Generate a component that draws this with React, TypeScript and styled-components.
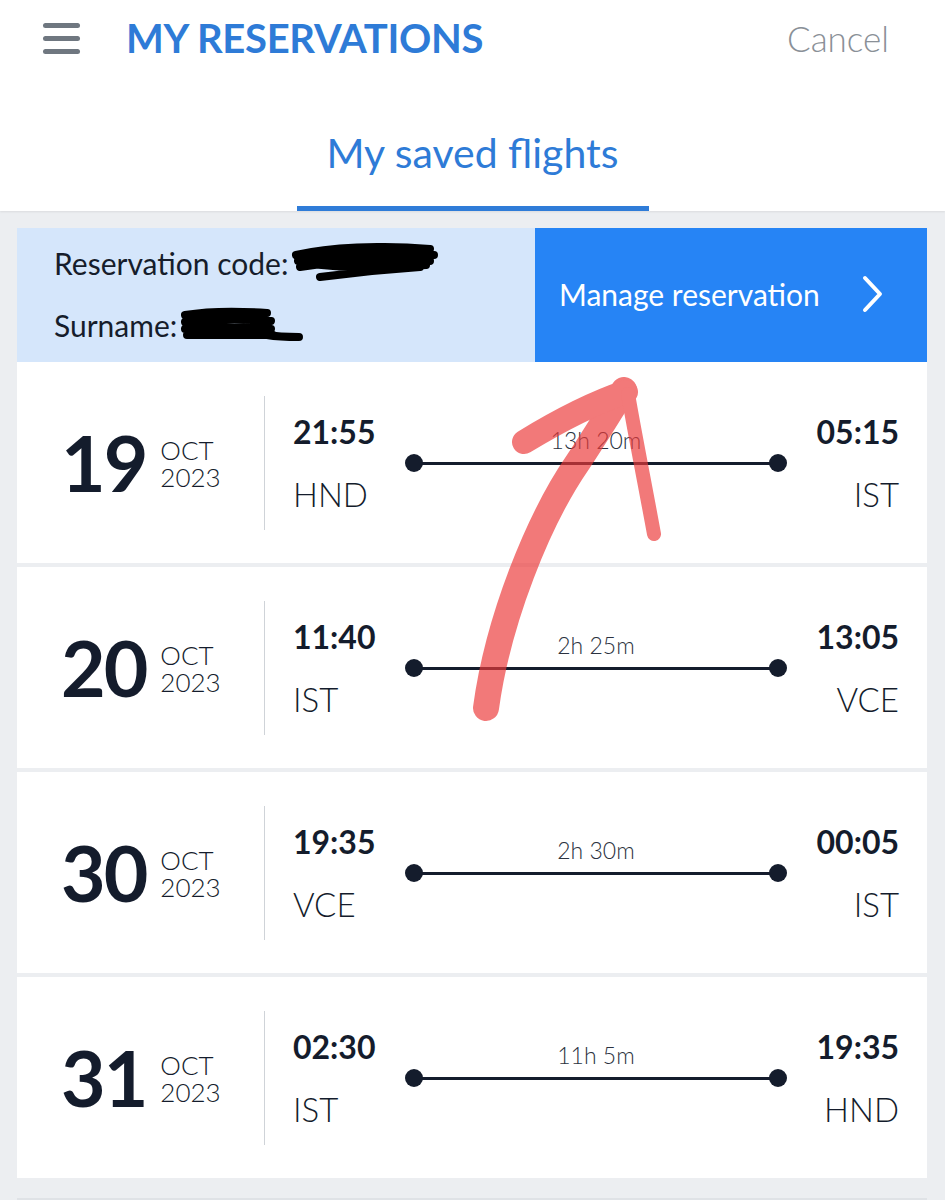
import React from "react";
import styled, { createGlobalStyle } from "styled-components";

const GlobalStyle = createGlobalStyle`
  html, body { margin: 0; padding: 0; }
  body {
    background: #eceef1;
    font-family: Lato, "Open Sans", sans-serif;
    color: #141c2c;
    width: 945px;
    height: 1200px;
    overflow: hidden;
  }
  * { box-sizing: border-box; }
`;

const Page = styled.div`
  position: relative;
  width: 945px;
  height: 1200px;
`;

const Header = styled.header`
  background: #fff;
  height: 211px;
  display: flex;
  flex-direction: column;
  box-shadow: 0 1px 2px rgba(0, 0, 0, 0.08);
`;

const TopBar = styled.div`
  height: 76px;
  display: flex;
  align-items: center;
  padding: 0 56px 0 43px;
`;

const Burger = styled.div`
  width: 37px;
  display: flex;
  flex-direction: column;
  gap: 8px;
  margin-right: 46px;
  span {
    display: block;
    height: 5px;
    border-radius: 3px;
    background: #6f7780;
  }
`;

const Title = styled.h1`
  margin: 0;
  font-size: 40px;
  font-weight: 700;
  letter-spacing: -0.3px;
  color: #2e7bd7;
  flex: 1;
`;

const CancelLink = styled.span`
  font-size: 35px;
  font-weight: 300;
  color: #8a9097;
`;

const Tabs = styled.div`
  flex: 1;
  display: flex;
  justify-content: center;
  align-items: flex-end;
`;

const Tab = styled.div`
  width: 352px;
  height: 135px;
  display: flex;
  justify-content: center;
  align-items: flex-start;
  padding-top: 52px;
  font-size: 41px;
  color: #2e7bd7;
  border-bottom: 5px solid #2f7cd8;
`;

const Content = styled.main`
  padding: 17px 18px 0 17px;
  display: flex;
  flex-direction: column;
`;

const ReservationCard = styled.section`
  display: grid;
  grid-template-columns: 518px 1fr;
  height: 134px;
`;

const ResInfo = styled.div`
  background: #d5e6fb;
  padding: 20px 0 0 37px;
  display: flex;
  flex-direction: column;
  gap: 32px;
  font-size: 30px;
  color: #161d2b;
`;

const ResLine = styled.div`
  display: flex;
  align-items: center;
  height: 30px;
`;

const Scribble = styled.svg`
  display: block;
  margin-left: 2px;
`;

const ManageButton = styled.button`
  border: 0;
  background: #2684f5;
  color: #fff;
  font-family: inherit;
  font-size: 30px;
  display: flex;
  align-items: center;
  justify-content: space-between;
  padding: 0 42px 2px 24px;
  cursor: pointer;
`;

const FlightList = styled.div`
  display: flex;
  flex-direction: column;
  gap: 4px;
  padding-bottom: 20px;
  border-bottom: 2px solid #dfe2e6;
`;

const FlightCard = styled.article`
  background: #fff;
  height: 201px;
  display: grid;
  grid-template-columns: 247px 1px 1fr;
  align-items: center;
`;

const DateBlock = styled.div`
  display: flex;
  align-items: center;
  padding-left: 44px;
  gap: 14px;
`;

const Day = styled.div`
  font-size: 77px;
  font-weight: 700;
  letter-spacing: -2px;
  line-height: 1;
  color: #141c2c;
`;

const MonthYear = styled.div`
  display: flex;
  flex-direction: column;
  font-size: 26px;
  font-weight: 300;
  line-height: 27px;
  color: #141c2c;
  padding-top: 2px;
`;

const Divider = styled.div`
  width: 1px;
  height: 134px;
  background: #cfd3d8;
`;

const Route = styled.div`
  display: grid;
  grid-template-columns: auto 1fr auto;
  align-items: center;
  padding: 0 28px 0 28px;
`;

const Point = styled.div<{ $align: "left" | "right" }>`
  display: flex;
  flex-direction: column;
  align-items: ${(p) => (p.$align === "left" ? "flex-start" : "flex-end")};
  gap: 26px;
  min-width: 80px;
`;

const Time = styled.div`
  font-size: 32px;
  font-weight: 700;
  line-height: 36px;
  color: #141c2c;
`;

const Airport = styled.div`
  font-size: 33px;
  font-weight: 300;
  line-height: 36px;
  color: #141c2c;
`;

const Track = styled.div`
  display: flex;
  flex-direction: column;
  align-items: stretch;
  padding: 0 30px 34px 30px;
`;

const Duration = styled.div`
  text-align: center;
  font-size: 23px;
  font-weight: 300;
  color: #2b3240;
  line-height: 26px;
  margin-bottom: 9px;
`;

const Line = styled.div`
  position: relative;
  height: 3px;
  margin: 0 9px;
  background: #141c2c;
  &::before,
  &::after {
    content: "";
    position: absolute;
    top: 50%;
    width: 18px;
    height: 18px;
    border-radius: 50%;
    background: #141c2c;
    transform: translate(-50%, -50%);
  }
  &::before { left: 0; }
  &::after { left: 100%; }
`;

const Annotation = styled.svg`
  position: absolute;
  left: 0;
  top: 0;
  pointer-events: none;
`;

type Flight = {
  day: string;
  dep: string;
  from: string;
  dur: string;
  arr: string;
  to: string;
};

const flights: Flight[] = [
  { day: "19", dep: "21:55", from: "HND", dur: "13h 20m", arr: "05:15", to: "IST" },
  { day: "20", dep: "11:40", from: "IST", dur: "2h 25m", arr: "13:05", to: "VCE" },
  { day: "30", dep: "19:35", from: "VCE", dur: "2h 30m", arr: "00:05", to: "IST" },
  { day: "31", dep: "02:30", from: "IST", dur: "11h 5m", arr: "19:35", to: "HND" },
];

const Chevron = () => (
  <svg width="24" height="38" viewBox="0 0 24 38">
    <path d="M4 3 L19 19 L4 35" fill="none" stroke="#fff" strokeWidth="4" strokeLinecap="round" strokeLinejoin="round" />
  </svg>
);

const CodeScribble = () => (
  <Scribble width="150" height="40" viewBox="0 0 150 40">
    <path
      d="M6 12 C40 4 90 2 140 6 M8 18 C50 12 100 10 144 12 M10 24 C50 18 100 16 140 18 M12 20 C60 26 110 24 136 22 M30 34 C60 30 100 26 130 24"
      fill="none"
      stroke="#000"
      strokeWidth="8"
      strokeLinecap="round"
    />
  </Scribble>
);

const NameScribble = () => (
  <Scribble width="125" height="36" viewBox="0 0 125 36">
    <path
      d="M6 8 C30 4 60 4 88 6 M6 15 C35 12 70 12 92 14 M6 22 C35 20 70 20 92 22 M8 28 C35 28 70 28 94 28 M88 28 C100 30 110 30 120 30"
      fill="none"
      stroke="#000"
      strokeWidth="8"
      strokeLinecap="round"
    />
  </Scribble>
);

export default function App() {
  return (
    <Page>
      <GlobalStyle />
      <Header>
        <TopBar>
          <Burger>
            <span />
            <span />
            <span />
          </Burger>
          <Title>MY RESERVATIONS</Title>
          <CancelLink>Cancel</CancelLink>
        </TopBar>
        <Tabs>
          <Tab>My saved flights</Tab>
        </Tabs>
      </Header>
      <Content>
        <ReservationCard>
          <ResInfo>
            <ResLine>
              Reservation code:
              <CodeScribble />
            </ResLine>
            <ResLine>
              Surname:
              <NameScribble />
            </ResLine>
          </ResInfo>
          <ManageButton>
            Manage reservation
            <Chevron />
          </ManageButton>
        </ReservationCard>
        <FlightList>
          {flights.map((f) => (
            <FlightCard key={f.day}>
              <DateBlock>
                <Day>{f.day}</Day>
                <MonthYear>
                  <span>OCT</span>
                  <span>2023</span>
                </MonthYear>
              </DateBlock>
              <Divider />
              <Route>
                <Point $align="left">
                  <Time>{f.dep}</Time>
                  <Airport>{f.from}</Airport>
                </Point>
                <Track>
                  <Duration>{f.dur}</Duration>
                  <Line />
                </Track>
                <Point $align="right">
                  <Time>{f.arr}</Time>
                  <Airport>{f.to}</Airport>
                </Point>
              </Route>
            </FlightCard>
          ))}
        </FlightList>
      </Content>
      <Annotation width="945" height="1200" viewBox="0 0 945 1200">
        <g fill="none" strokeLinecap="round" strokeLinejoin="round" opacity="0.68">
          <path d="M486 708 C498 620 538 520 578 462 C598 432 612 408 624 390" stroke="#ec3a3a" strokeWidth="26" />
          <path d="M524 442 C560 420 596 402 626 392" stroke="#ec3a3a" strokeWidth="24" />
          <path d="M628 394 C636 440 646 490 654 534" stroke="#ec3a3a" strokeWidth="14" />
        </g>
      </Annotation>
    </Page>
  );
}
